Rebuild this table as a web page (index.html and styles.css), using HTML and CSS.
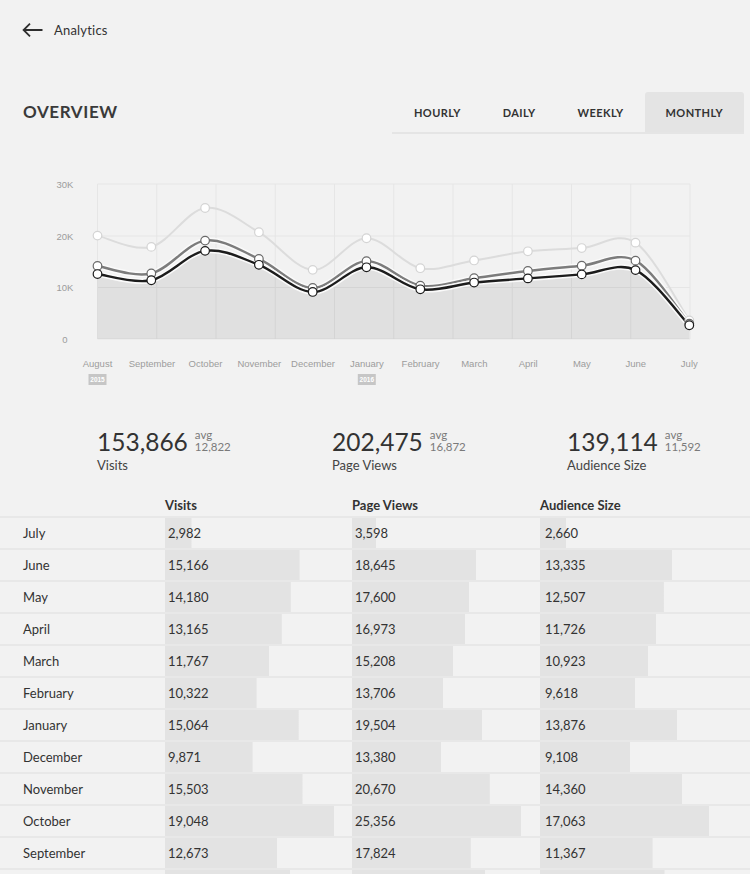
FILE: index.html
```html
<!DOCTYPE html>
<html lang="en">
<head>
<meta charset="utf-8">
<title>Analytics</title>
<link rel="stylesheet" href="styles.css">
</head>
<body>
<div class="page">
  <header class="topbar">
    <svg class="back" width="21" height="14" viewBox="0 0 21 14"><path d="M20.5 7H1.6M8 0.7L1.6 7L8 13.3" fill="none" stroke="#2e2e2e" stroke-width="1.8"/></svg>
    <span class="crumb">Analytics</span>
  </header>

  <section class="overview">
    <h1 class="title">OVERVIEW</h1>
    <nav class="tabs">
      <span class="tab">HOURLY</span>
      <span class="tab">DAILY</span>
      <span class="tab">WEEKLY</span>
      <span class="tab active">MONTHLY</span>
    </nav>
  </section>

  <div class="chart">
    <svg width="750" height="293" viewBox="0 134 750 293">
      <g class="grid">
        <line x1="97.5" y1="184" x2="690" y2="184"/>
        <line x1="97.5" y1="236" x2="690" y2="236"/>
        <line x1="97.5" y1="287.5" x2="690" y2="287.5"/>
        <line x1="97.5" y1="339" x2="690" y2="339"/>
        <line x1="97.5" y1="184" x2="97.5" y2="339"/>
        <line x1="156.8" y1="184" x2="156.8" y2="339"/>
        <line x1="216" y1="184" x2="216" y2="339"/>
        <line x1="275.3" y1="184" x2="275.3" y2="339"/>
        <line x1="334.5" y1="184" x2="334.5" y2="339"/>
        <line x1="393.8" y1="184" x2="393.8" y2="339"/>
        <line x1="453" y1="184" x2="453" y2="339"/>
        <line x1="512.3" y1="184" x2="512.3" y2="339"/>
        <line x1="571.5" y1="184" x2="571.5" y2="339"/>
        <line x1="630.8" y1="184" x2="630.8" y2="339"/>
        <line x1="690" y1="184" x2="690" y2="339"/>
      </g>
      <g class="ylabels">
        <text x="65" y="187.5">30K</text>
        <text x="65" y="239.5">20K</text>
        <text x="65" y="291">10K</text>
        <text x="65" y="342.5">0</text>
      </g>
      <g class="xlabels">
        <text x="97.5" y="366.5">August</text>
        <text x="152" y="366.5">September</text>
        <text x="205.5" y="366.5">October</text>
        <text x="259.3" y="366.5">November</text>
        <text x="313" y="366.5">December</text>
        <text x="366.8" y="366.5">January</text>
        <text x="420.6" y="366.5">February</text>
        <text x="474.4" y="366.5">March</text>
        <text x="528.2" y="366.5">April</text>
        <text x="581.9" y="366.5">May</text>
        <text x="635.7" y="366.5">June</text>
        <text x="689.3" y="366.5">July</text>
      </g>
      <g class="badges">
        <rect x="88.5" y="374" width="18" height="11"/>
        <text x="97.5" y="381.7">2015</text>
        <rect x="357.8" y="374" width="18" height="11"/>
        <text x="366.8" y="381.7">2016</text>
      </g>
      <path id="au-area" class="area" d=""/>
      <path id="pv-line" class="line-light" d=""/>
      <path id="vi-halo" class="halo" d=""/>
      <path id="vi-line" class="line-mid" d=""/>
      <path id="au-halo" class="halo" d=""/>
      <path id="au-line" class="line-dark" d=""/>
      <g id="pv-pts" class="pts-light"></g>
      <g id="vi-pts" class="pts-mid"></g>
      <g id="au-pts" class="pts-dark"></g>
    </svg>
  </div>

  <section class="stats">
    <div class="stat">
      <div class="stat-main"><span class="stat-num">153,866</span><span class="stat-avg"><span>avg</span><span>12,822</span></span></div>
      <div class="stat-label">Visits</div>
    </div>
    <div class="stat">
      <div class="stat-main"><span class="stat-num">202,475</span><span class="stat-avg"><span>avg</span><span>16,872</span></span></div>
      <div class="stat-label">Page Views</div>
    </div>
    <div class="stat">
      <div class="stat-main"><span class="stat-num">139,114</span><span class="stat-avg"><span>avg</span><span>11,592</span></span></div>
      <div class="stat-label">Audience Size</div>
    </div>
  </section>

  <div class="table">
    <div class="thead">
      <span></span><span class="th">Visits</span><span class="th">Page Views</span><span class="th">Audience Size</span>
    </div>
    <div class="trow"><span class="month">July</span><span class="cell c1" style="background-size:26.5px 100%">2,982</span><span class="cell c2" style="background-size:24px 100%">3,598</span><span class="cell c3" style="background-size:26.3px 100%">2,660</span></div>
    <div class="trow"><span class="month">June</span><span class="cell c1" style="background-size:134.6px 100%">15,166</span><span class="cell c2" style="background-size:124.3px 100%">18,645</span><span class="cell c3" style="background-size:132.1px 100%">13,335</span></div>
    <div class="trow"><span class="month">May</span><span class="cell c1" style="background-size:125.8px 100%">14,180</span><span class="cell c2" style="background-size:117.3px 100%">17,600</span><span class="cell c3" style="background-size:123.9px 100%">12,507</span></div>
    <div class="trow"><span class="month">April</span><span class="cell c1" style="background-size:116.8px 100%">13,165</span><span class="cell c2" style="background-size:113.1px 100%">16,973</span><span class="cell c3" style="background-size:116.1px 100%">11,726</span></div>
    <div class="trow"><span class="month">March</span><span class="cell c1" style="background-size:104.4px 100%">11,767</span><span class="cell c2" style="background-size:101.4px 100%">15,208</span><span class="cell c3" style="background-size:108.2px 100%">10,923</span></div>
    <div class="trow"><span class="month">February</span><span class="cell c1" style="background-size:91.6px 100%">10,322</span><span class="cell c2" style="background-size:91.4px 100%">13,706</span><span class="cell c3" style="background-size:95.3px 100%">9,618</span></div>
    <div class="trow"><span class="month">January</span><span class="cell c1" style="background-size:133.7px 100%">15,064</span><span class="cell c2" style="background-size:130px 100%">19,504</span><span class="cell c3" style="background-size:137.4px 100%">13,876</span></div>
    <div class="trow"><span class="month">December</span><span class="cell c1" style="background-size:87.6px 100%">9,871</span><span class="cell c2" style="background-size:89.2px 100%">13,380</span><span class="cell c3" style="background-size:90.2px 100%">9,108</span></div>
    <div class="trow"><span class="month">November</span><span class="cell c1" style="background-size:137.5px 100%">15,503</span><span class="cell c2" style="background-size:137.8px 100%">20,670</span><span class="cell c3" style="background-size:142.2px 100%">14,360</span></div>
    <div class="trow"><span class="month">October</span><span class="cell c1" style="background-size:169px 100%">19,048</span><span class="cell c2" style="background-size:169px 100%">25,356</span><span class="cell c3" style="background-size:169px 100%">17,063</span></div>
    <div class="trow"><span class="month">September</span><span class="cell c1" style="background-size:112.4px 100%">12,673</span><span class="cell c2" style="background-size:118.8px 100%">17,824</span><span class="cell c3" style="background-size:112.6px 100%">11,367</span></div>
    <div class="trow"><span class="month">August</span><span class="cell c1" style="background-size:125.3px 100%">14,125</span><span class="cell c2" style="background-size:133.4px 100%">20,011</span><span class="cell c3" style="background-size:124.5px 100%">12,571</span></div>
  </div>
</div>
<script src="script.js"></script>
</body>
</html>
```

FILE: styles.css
```css
html, body {
  margin: 0;
  padding: 0;
  background: #f2f2f2;
}
body {
  font-family: "Lato", "Liberation Sans", sans-serif;
  color: #333;
}
.page {
  width: 750px;
  overflow: hidden;
}
.topbar {
  height: 60px;
  display: flex;
  align-items: center;
  padding-left: 22px;
  gap: 11px;
}
.back {
  display: block;
}
.crumb {
  font-size: 13px;
  color: #333;
  letter-spacing: 0.2px;
}
.overview {
  margin-top: 32px;
  height: 44px;
  display: flex;
  justify-content: space-between;
  align-items: flex-start;
  padding: 0 6px 0 23px;
}
.title {
  margin: 0;
  font-size: 17px;
  line-height: 40px;
  font-weight: 700;
  letter-spacing: 0.6px;
  color: #3a3a3a;
}
.tabs {
  display: flex;
  border-bottom: 2px solid #e5e5e5;
}
.tab {
  padding: 0 21px;
  height: 40px;
  line-height: 41px;
  font-size: 11px;
  font-weight: 700;
  letter-spacing: 0.4px;
  color: #333;
}
.tab:first-child {
  padding-left: 22px;
}
.tab.active {
  background: #e4e4e4;
  border-radius: 3px 3px 0 0;
}
.chart {
  margin-top: -2px;
}
.chart svg {
  display: block;
}
.grid line {
  stroke: #e6e6e6;
  stroke-width: 1;
}
.ylabels text,
.xlabels text {
  font-family: "Liberation Sans", Arial, sans-serif;
  font-size: 9.5px;
  fill: #9c9c9c;
  text-anchor: middle;
}
.badges rect {
  fill: #c6c6c6;
}
.badges text {
  font-family: "Liberation Sans", Arial, sans-serif;
  font-size: 6.5px;
  font-weight: 700;
  fill: #ffffff;
  text-anchor: middle;
}
.area {
  fill: rgba(0, 0, 0, 0.075);
  stroke: none;
}
.line-light {
  fill: none;
  stroke: #dcdcdc;
  stroke-width: 2;
}
.halo {
  fill: none;
  stroke: #fafafa;
  stroke-width: 5.5;
}
.line-mid {
  fill: none;
  stroke: #7c7c7c;
  stroke-width: 2.4;
}
.line-dark {
  fill: none;
  stroke: #1c1c1c;
  stroke-width: 2.4;
}
.pts-light circle {
  fill: #ffffff;
  stroke: #d4d4d4;
  stroke-width: 1.2;
}
.pts-mid circle {
  fill: #ffffff;
  stroke: #6a6a6a;
  stroke-width: 1.2;
}
.pts-dark circle {
  fill: #ffffff;
  stroke: #1c1c1c;
  stroke-width: 1.2;
}
.stats {
  display: grid;
  grid-template-columns: 235px 235px 1fr;
  padding-left: 97px;
}
.stat-main {
  display: flex;
  align-items: flex-end;
  gap: 7px;
}
.stat-num {
  font-size: 24.5px;
  line-height: 30px;
  color: #333;
}
.stat-avg {
  display: flex;
  flex-direction: column;
  font-size: 11.5px;
  line-height: 12px;
  color: #7a7a7a;
  padding-bottom: 4px;
}
.stat-label {
  font-size: 13px;
  line-height: 16px;
  color: #444;
}
.thead,
.trow {
  display: grid;
  grid-template-columns: 165px 187px 188px 1fr;
}
.thead {
  height: 43px;
  align-items: end;
  padding-bottom: 3px;
  box-sizing: border-box;
}
.th {
  font-size: 13px;
  font-weight: 700;
  line-height: 16px;
  color: #333;
}
.trow {
  height: 32px;
  box-sizing: border-box;
  border-top: 2px solid #e8e8e8;
  font-size: 13px;
  line-height: 30px;
  color: #333;
}
.month {
  padding-left: 23px;
}
.cell {
  background-image: linear-gradient(#e3e3e3, #e3e3e3);
  background-repeat: no-repeat;
  background-position: left top;
}
.c1, .c2 {
  padding-left: 3px;
}
.c3 {
  padding-left: 5px;
}
```

FILE: script.js
```js
(function () {
  var pv = [20011, 17824, 25356, 20670, 13380, 19504, 13706, 15208, 16973, 17600, 18645, 3598];
  var vi = [14125, 12673, 19048, 15503, 9871, 15064, 10322, 11767, 13165, 14180, 15166, 2982];
  var au = [12571, 11367, 17063, 14360, 9108, 13876, 9618, 10923, 11726, 12507, 13335, 2660];
  var NS = "http://www.w3.org/2000/svg";
  function X(i) { return 97.5 + i * 53.8; }
  function Y(v) { return 339 - v * 155 / 30000; }
  function pts(a) { return a.map(function (v, i) { return [X(i), Y(v)]; }); }
  function f(n) { return n.toFixed(2); }
  function curve(p) {
    var d = "M" + f(p[0][0]) + "," + f(p[0][1]);
    for (var i = 0; i < p.length - 1; i++) {
      var p0 = p[Math.max(i - 1, 0)], p1 = p[i], p2 = p[i + 1], p3 = p[Math.min(i + 2, p.length - 1)];
      var c1x = p1[0] + (p2[0] - p0[0]) / 6, c1y = p1[1] + (p2[1] - p0[1]) / 6;
      var c2x = p2[0] - (p3[0] - p1[0]) / 6, c2y = p2[1] - (p3[1] - p1[1]) / 6;
      d += " C" + f(c1x) + "," + f(c1y) + " " + f(c2x) + "," + f(c2y) + " " + f(p2[0]) + "," + f(p2[1]);
    }
    return d;
  }
  function dots(id, p) {
    var g = document.getElementById(id);
    p.forEach(function (q) {
      var c = document.createElementNS(NS, "circle");
      c.setAttribute("cx", f(q[0]));
      c.setAttribute("cy", f(q[1]));
      c.setAttribute("r", "4.3");
      g.appendChild(c);
    });
  }
  var P = pts(pv), V = pts(vi), A = pts(au);
  var dA = curve(A);
  document.getElementById("au-area").setAttribute("d", dA + " L" + f(A[A.length - 1][0]) + ",339 L" + f(A[0][0]) + ",339 Z");
  document.getElementById("pv-line").setAttribute("d", curve(P));
  document.getElementById("vi-halo").setAttribute("d", curve(V));
  document.getElementById("vi-line").setAttribute("d", curve(V));
  document.getElementById("au-halo").setAttribute("d", dA);
  document.getElementById("au-line").setAttribute("d", dA);
  dots("pv-pts", P);
  dots("vi-pts", V);
  dots("au-pts", A);
})();
```
